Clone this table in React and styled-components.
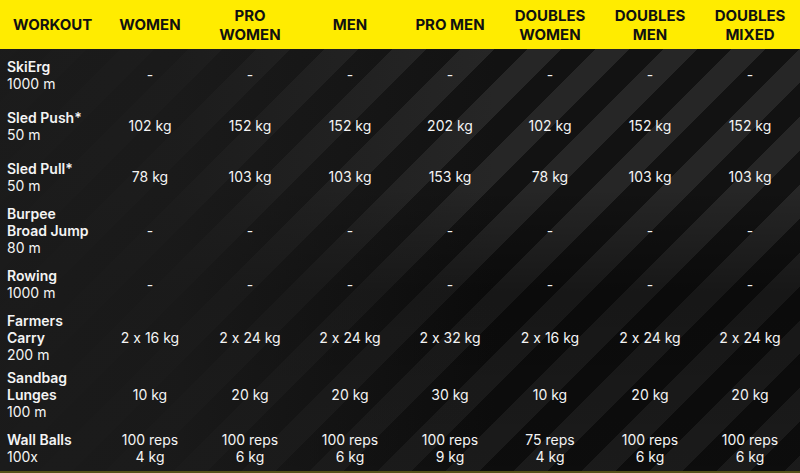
import styled, {createGlobalStyle} from 'styled-components'

const GlobalStyle = createGlobalStyle`
  html, body {
    margin: 0;
    padding: 0;
    background: #161616;
  }
  * {
    box-sizing: border-box;
  }
`

const columns = [
  'WORKOUT',
  'WOMEN',
  'PRO\nWOMEN',
  'MEN',
  'PRO MEN',
  'DOUBLES\nWOMEN',
  'DOUBLES\nMEN',
  'DOUBLES\nMIXED',
]

const workouts = [
  {name: 'SkiErg', dist: '1000 m', values: ['-', '-', '-', '-', '-', '-', '-']},
  {
    name: 'Sled Push*',
    dist: '50 m',
    values: ['102 kg', '152 kg', '152 kg', '202 kg', '102 kg', '152 kg', '152 kg'],
  },
  {
    name: 'Sled Pull*',
    dist: '50 m',
    values: ['78 kg', '103 kg', '103 kg', '153 kg', '78 kg', '103 kg', '103 kg'],
  },
  {
    name: 'Burpee\nBroad Jump',
    dist: '80 m',
    values: ['-', '-', '-', '-', '-', '-', '-'],
  },
  {name: 'Rowing', dist: '1000 m', values: ['-', '-', '-', '-', '-', '-', '-']},
  {
    name: 'Farmers\nCarry',
    dist: '200 m',
    values: [
      '2 x 16 kg',
      '2 x 24 kg',
      '2 x 24 kg',
      '2 x 32 kg',
      '2 x 16 kg',
      '2 x 24 kg',
      '2 x 24 kg',
    ],
  },
  {
    name: 'Sandbag\nLunges',
    dist: '100 m',
    values: ['10 kg', '20 kg', '20 kg', '30 kg', '10 kg', '20 kg', '20 kg'],
  },
  {
    name: 'Wall Balls',
    dist: '100x',
    values: [
      '100 reps\n4 kg',
      '100 reps\n6 kg',
      '100 reps\n6 kg',
      '100 reps\n9 kg',
      '75 reps\n4 kg',
      '100 reps\n6 kg',
      '100 reps\n6 kg',
    ],
  },
]

const Page = styled.div`
  width: 800px;
  height: 473px;
  overflow: hidden;
  position: relative;
  display: flex;
  flex-direction: column;
  font-family: Inter, Roboto, 'Liberation Sans', sans-serif;
  font-feature-settings: 'calt' 0;
  background-color: #171717;
  background-image: linear-gradient(
      to right,
      rgba(27, 27, 27, 0.97) 0%,
      rgba(27, 27, 27, 0.88) 22%,
      rgba(27, 27, 27, 0.4) 45%,
      rgba(27, 27, 27, 0) 62%
    ),
    linear-gradient(
      to bottom,
      rgba(0, 0, 0, 0) 40%,
      rgba(0, 0, 0, 0.4) 62%,
      rgba(0, 0, 0, 0.3) 100%
    ),
    repeating-linear-gradient(
      135deg,
      #121212 0px,
      #121212 24px,
      #262626 24px,
      #262626 48px
    );
`

const HeaderRow = styled.div`
  display: grid;
  grid-template-columns: repeat(8, 100px);
  height: 49px;
  flex-shrink: 0;
  background: #ffec00;
  align-items: center;
`

const HeadCell = styled.div`
  font-size: 15px;
  font-weight: 700;
  line-height: 19px;
  color: #111;
  white-space: pre-line;
  text-align: ${p => (p.$first ? 'left' : 'center')};
  padding-left: ${p => (p.$first ? '13px' : '0')};
`

const Body = styled.div`
  display: flex;
  flex-direction: column;
`

const Row = styled.div`
  display: grid;
  grid-template-columns: repeat(8, 100px);
  flex-shrink: 0;
  min-height: 51px;
  padding: 2.75px 0;
  align-items: center;
`

const NameCell = styled.div`
  padding-left: 7px;
  font-size: 14px;
  line-height: 17px;
  color: #f4f4f4;
`

const Name = styled.div`
  font-weight: 600;
  white-space: pre-line;
`

const Dist = styled.div`
  font-weight: 400;
`

const ValueCell = styled.div`
  font-size: 14px;
  line-height: 17px;
  color: #f4f4f4;
  text-align: center;
  white-space: pre-line;
`

const BottomLine = styled.div`
  position: absolute;
  left: 0;
  right: 0;
  bottom: 0;
  height: 2px;
  background: #55521a;
`

export default function App() {
  return (
    <>
      <GlobalStyle />
      <Page>
        <HeaderRow>
          {columns.map((c, i) => (
            <HeadCell key={c} $first={i === 0}>
              {c}
            </HeadCell>
          ))}
        </HeaderRow>
        <Body>
          {workouts.map(w => (
            <Row key={w.name}>
              <NameCell>
                <Name>{w.name}</Name>
                <Dist>{w.dist}</Dist>
              </NameCell>
              {w.values.map((v, i) => (
                <ValueCell key={i}>{v}</ValueCell>
              ))}
            </Row>
          ))}
        </Body>
        <BottomLine />
      </Page>
    </>
  )
}
